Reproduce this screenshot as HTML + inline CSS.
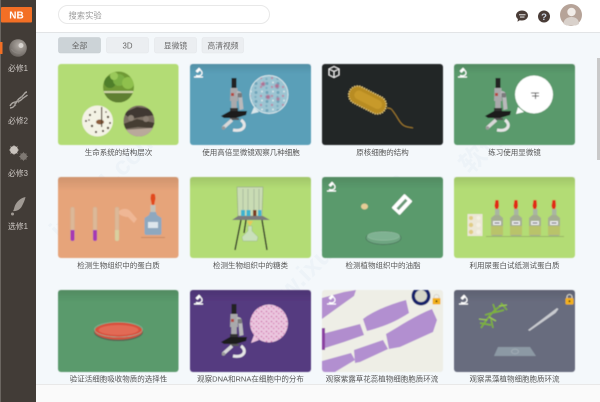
<!DOCTYPE html>
<html lang="zh"><head><meta charset="utf-8"><title>实验</title>
<style>
html,body{margin:0;padding:0;width:600px;height:402px;overflow:hidden;background:#f4f8fb}
svg{display:block}
text{font-family:"Liberation Sans","Noto Sans CJK SC",sans-serif}
.l{font-size:7.5px;fill:#555;text-anchor:middle}
.s{font-size:7.8px;fill:#cfcac6;text-anchor:middle}
.t{font-size:7.8px;fill:#666;text-anchor:middle}
.w{font-size:26px;fill:#edf3f8;font-weight:bold}
</style></head><body>
<svg width="600" height="402" viewBox="0 0 600 402" xmlns="http://www.w3.org/2000/svg">
<defs>
<filter id="b" x="-5%" y="-5%" width="110%" height="110%"><feGaussianBlur stdDeviation="0.45"/></filter>
<filter id="b2"><feGaussianBlur stdDeviation="0.8"/></filter>
<linearGradient id="shade" x1="0" y1="0" x2="0" y2="1"><stop offset="0" stop-color="#000" stop-opacity=".1"/><stop offset="1" stop-color="#000" stop-opacity="0"/></linearGradient>
<radialGradient id="cell" cx=".6" cy=".35" r=".7"><stop offset="0" stop-color="#b5afa9"/><stop offset="1" stop-color="#67615c"/></radialGradient>
<pattern id="tis" width="11" height="9" patternUnits="userSpaceOnUse"><rect width="11" height="9" fill="#9cc4d2"/><circle cx="3" cy="2.500" r="1.500" fill="#6fa5ba"/><circle cx="8" cy="6" r="1.200" fill="#b98fa8"/><circle cx="9" cy="1.500" r="1" fill="#d5e6ea"/><circle cx="2.500" cy="7" r="1.200" fill="#7fb0c2"/></pattern>
<pattern id="pnk" width="5" height="5" patternUnits="userSpaceOnUse"><rect width="5" height="5" fill="#eac6de"/><circle cx="1.500" cy="1.500" r=".8" fill="#cf70ac"/><circle cx="3.700" cy="3.500" r=".9" fill="#dc8fc0"/></pattern>
<symbol id="mic" width="28" height="56" viewBox="0 0 28 56" overflow="visible">
<rect x="11.500" y="0" width="5" height="10" fill="#222"/>
<path d="M10.500 10h7l.5 13h-1.200v9h-5.600v-9h-1.200z" fill="#a9a9ab"/>
<rect x="11" y="15" width="3" height="3" fill="#b5483f"/>
<path d="M17 13c3 0 4.500 1 5 4l1.500 14-4 1-1-12-2-2z" fill="#b9b9bb"/>
<rect x="17.500" y="15" width="4.500" height="4.500" rx="1" fill="#7a7a7c"/>
<rect x="10" y="30" width="8" height="4" fill="#333"/>
<path d="M1 38l9-5h17l-1 4-10 3H4z" fill="#1c1c1e"/>
<rect x="10" y="40" width="9" height="2" fill="#555"/>
<path d="M3 50L12 42" stroke="#d8d8d8" stroke-width="3.500" fill="none"/>
<path d="M21 42C27 46 25 54 13 52" stroke="#e6e6e6" stroke-width="3" fill="none"/>
<circle cx="3.500" cy="50" r="1.800" fill="#999"/>
</symbol>
<symbol id="ico" width="11" height="11" viewBox="0 0 11 11" overflow="visible">
<path d="M1 10h9M3 8.500c3 1 6 0 6-2.500 0-1.500-1-2.500-2-3" fill="none" stroke="#fff" stroke-width="1.200"/>
<path d="M2.500 4l3.500-3.500 2 2L4.500 6z" fill="#fff"/>
</symbol>
<symbol id="lock" width="9" height="11" viewBox="0 0 9 11" overflow="visible">
<path d="M2 5V3a2.500 2.500 0 0 1 5 0v2" fill="none" stroke="#d8d6cc" stroke-width="1.100"/>
<rect x="0.500" y="4" width="8" height="6.500" rx="1" fill="#f2b01e"/>
<circle cx="4.500" cy="7.200" r="1" fill="#5a3d05"/>
</symbol>
<symbol id="bottle" width="16" height="37" viewBox="0 0 16 37" overflow="visible">
<path d="M6.500 0h3l.5 6-1 3h-2.500l-1-3z" fill="#e02c12"/>
<rect x="6" y="9" width="4.500" height="6" fill="#aab5a2"/>
<path d="M5.500 15h5l3.500 3v16a2 2 0 0 1-2 2H4a2 2 0 0 1-2-2V18z" fill="#a4ad92"/>
<rect x="2" y="26" width="12" height="9" fill="#b9c36a"/>
<rect x="4" y="21" width="8" height="4" fill="#e8e8ea"/>
<rect x="5.500" y="22.500" width="5" height="1" fill="#556"/>
</symbol>
<clipPath id="c9"><rect x="322" y="290" width="121" height="82" rx="3"/></clipPath>
<clipPath id="f1"><circle cx="118.500" cy="87" r="15.500"/></clipPath>
<clipPath id="f3"><circle cx="139" cy="121" r="15.500"/></clipPath>
</defs>

<rect width="600" height="402" fill="#f4f8fb"/>

<g>
<text class="w" transform="translate(60 240) rotate(-45)">ixue51.com</text>
<text class="w" transform="translate(260 330) rotate(-45)">www.ixue51.com</text>
<text class="w" transform="translate(470 175) rotate(-45)">软件</text>
</g>

<rect x="36" y="0" width="564" height="32" fill="#fff"/>
<rect x="36" y="32" width="564" height="1" fill="#e2e4e6"/>
<rect x="58.500" y="5.500" width="211" height="18" rx="9" fill="#fff" stroke="#e8e8e8"/>
<text x="68.500" y="18.500" font-size="8.300" fill="#9a9a9a">搜索实验</text>

<path d="M522 10.500c3.500 0 6 2.300 6 5s-2.500 5-6 5c-.8 0-1.500-.1-2.200-.3l-2.300 1.500.4-2.700c-1.200-.9-1.900-2.100-1.900-3.500 0-2.700 2.500-5 6-5z" fill="#4a3d38"/>
<rect x="519" y="14.200" width="6.500" height="1.100" fill="#ddd"/><rect x="520" y="16.500" width="4.500" height="1.100" fill="#ddd"/>
<circle cx="544" cy="16.500" r="6" fill="#4a3d38"/>
<text x="544" y="20" font-size="9.500" font-weight="bold" fill="#cfd8e6" text-anchor="middle">?</text>
<circle cx="571" cy="15" r="11" fill="#b6a398"/>
<circle cx="571.500" cy="12" r="4.200" fill="#f1ece8"/>
<path d="M563.500 24c0-4.500 3.500-7 8-7s7.500 2.500 7.500 7l-3 1.500h-9.500z" fill="#d9d1cb"/>

<rect x="0" y="0" width="36" height="402" fill="#423c37"/>
<rect x="0" y="0" width="1" height="402" fill="#6b6661"/>
<rect x="1" y="7" width="31" height="15.500" rx="1" fill="#f36f25"/>
<text x="16.500" y="18.500" font-size="10" font-weight="bold" fill="#fff" text-anchor="middle">NB</text>
<rect x="0" y="42" width="2.500" height="12" fill="#f36f25"/>
<circle cx="18" cy="48" r="8.800" fill="url(#cell)"/>
<circle cx="21" cy="45.500" r="2.500" fill="#d8d4d0"/><path d="M11.500 49c2 3.500 5 4.500 9 4" fill="none" stroke="#8c8681" stroke-width="1"/>
<text class="s" x="18" y="71">必修1</text>
<g fill="none" stroke="#aaa5a0" stroke-width="1.400"><path d="M10 108C16 108 15 101 20 98S24 92 27 92"/><path d="M10 106C13 100 18 103 21 100S25 97 27.500 95"/></g>
<path d="M14 103l2 3M17 100l2 3M21 96l2 2" stroke="#8e8984" stroke-width=".8"/>
<text class="s" x="18" y="123.500">必修2</text>
<path d="M14 145v10M9 150h10M10.500 146.500l7 7M17.500 146.500l-7 7" stroke="#c2bcb6" stroke-width=".7"/>
<path d="M23.500 152v9M19 156.500h9M20.500 153.500l6 6M26.500 153.500l-6 6" stroke="#7e7872" stroke-width=".7"/>
<circle cx="14" cy="150" r="4" fill="#c8c2bc"/><circle cx="23.500" cy="156.500" r="3.500" fill="#7e7872"/>
<text class="s" x="18" y="176">必修3</text>
<path d="M25.500 197c-5 1-9.500 5-11 10-.5 2-1 3.500-1.500 4 3 .5 7-1 9-5 1.500-3 3-6 3.500-9z" fill="#a09a94"/>
<circle cx="12.500" cy="214" r="1.500" fill="#a09a94"/>
<text class="s" x="18" y="229">选修1</text>

<rect x="58.500" y="37.500" width="42" height="15.500" rx="2" fill="#ccd3d7" stroke="#c4cbcf" stroke-width=".6"/>
<text class="t" x="79.500" y="48.500">全部</text>
<rect x="106.500" y="37.500" width="42" height="15.500" rx="2" fill="#ebeef1" stroke="#e3e6e9" stroke-width=".6"/>
<text class="t" x="127.500" y="48.500">3D</text>
<rect x="154.500" y="37.500" width="42" height="15.500" rx="2" fill="#ebeef1" stroke="#e3e6e9" stroke-width=".6"/>
<text class="t" x="175.500" y="48.500">显微镜</text>
<rect x="202" y="37.500" width="41.500" height="15.500" rx="2" fill="#ebeef1" stroke="#e3e6e9" stroke-width=".6"/>
<text class="t" x="223" y="48.500">高清视频</text>

<g filter="url(#b)">
<!-- ROW 1 -->
<rect x="58" y="64" width="120.500" height="81" rx="3" fill="#b3dc75"/>
<g clip-path="url(#f1)">
<rect x="103" y="71" width="31" height="32" fill="#6f9a35"/>
<circle cx="110" cy="82" r="6" fill="#4f7f2c"/><circle cx="119" cy="80" r="6" fill="#7bb044"/><circle cx="128" cy="83" r="6" fill="#8fc04d"/><circle cx="114" cy="76" r="4" fill="#9ac95a"/>
<rect x="103" y="91" width="31" height="2" fill="#d0d4a8"/>
<rect x="103" y="93" width="31" height="10" fill="#5f7f30"/>
</g>
<circle cx="97.500" cy="121" r="15.500" fill="#f3f2e4"/>
<g fill="#4f3f2f"><ellipse cx="100" cy="122" rx="4" ry="2.500" fill="#8a5c3a"/><rect x="101" y="107" width="1.200" height="20"/><circle cx="90" cy="115" r="1.100"/><circle cx="108" cy="117" r="1.200"/><circle cx="92" cy="126" r="1.200"/><circle cx="108" cy="128" r="1.200"/><circle cx="86" cy="121" r="1"/><circle cx="96" cy="132" r="1.100"/><circle cx="95" cy="112" r="1"/><circle cx="110" cy="123" r="1"/><circle cx="103" cy="131" r="1.100"/><circle cx="89" cy="120" r=".8"/><circle cx="106" cy="112" r=".8"/></g>
<g clip-path="url(#f3)">
<rect x="123" y="105" width="32" height="32" fill="#7a6e62"/>
<path d="M123 113l14-6 14 2 4 6-14 2-10 2z" fill="#3f3830"/>
<path d="M123 124l14-5 18 4-3 5-14-1-13 2z" fill="#443c33"/>
<circle cx="131" cy="118" r="3" fill="#8e8376"/><circle cx="146" cy="119" r="3" fill="#8a7e72"/>
<path d="M123 130l30-2v9h-30z" fill="#b9a99b"/>
</g>

<rect x="190" y="64" width="121" height="81" rx="3" fill="#5a9fb8"/>
<rect x="190" y="64" width="121" height="10" fill="url(#shade)"/>
<use href="#ico" x="193" y="67"/>
<use href="#mic" x="220" y="78"/>
<path d="M254 107l-3 7 8-2z" fill="#d8e6ea"/>
<circle cx="269" cy="94.500" r="19" fill="url(#tis)" stroke="#d8e6ea" stroke-width="1"/>
<g fill="#b0688c" filter="url(#b2)"><circle cx="263" cy="84" r="2"/><circle cx="277" cy="86" r="2"/><circle cx="268" cy="97" r="2"/><circle cx="278" cy="99" r="1.500"/></g>

<rect x="322" y="64" width="121" height="81" rx="3" fill="#242527"/>
<path d="M329 69l5-2.500 5 2.500v6l-5 2.500-5-2.500zM329 69l5 2.500 5-2.500M334 71.500v6" fill="none" stroke="#fff" stroke-width=".9"/>
<path d="M387 108c5 0 5 2 8 6s4 8 8 11 8 2 10 3" fill="none" stroke="#a9812c" stroke-width=".9"/>
<g transform="rotate(27 367.500 100)">
<rect x="347.500" y="91" width="40" height="18" rx="9" fill="#b88c24"/>
<rect x="347.500" y="91" width="40" height="18" rx="9" fill="none" stroke="#f3dd90" stroke-width="1.300" stroke-dasharray="1 1.500"/>
<rect x="353" y="95" width="30" height="9" rx="4.500" fill="#c89a2c"/>
</g>

<rect x="454" y="64" width="121" height="81" rx="3" fill="#5a9a6c"/>
<rect x="454" y="64" width="121" height="10" fill="url(#shade)"/>
<use href="#ico" x="457" y="67"/>
<use href="#mic" x="484" y="78"/>
<path d="M518 107l-2 7 8-2z" fill="#fff"/>
<circle cx="534" cy="94.500" r="19" fill="#fff"/>
<path d="M531 93h8M532 96h7M535.500 93v6" stroke="#444" stroke-width="1" fill="none"/>

<!-- ROW 2 -->
<rect x="58" y="177" width="120.500" height="81" rx="3" fill="#e6a47a"/>
<rect x="58" y="177" width="120.500" height="14" fill="url(#shade)"/>
<rect x="70.500" y="207" width="4" height="34" rx="2" fill="#dcb898" stroke="#cfae90" stroke-width=".4"/>
<path d="M70.500 230h4v9a2 2 0 0 1-4 0z" fill="#a638b4"/>
<rect x="93" y="207" width="4" height="34" rx="2" fill="#dcb898" stroke="#cfae90" stroke-width=".4"/>
<path d="M93 230h4v9a2 2 0 0 1-4 0z" fill="#a638b4"/>
<rect x="115" y="207" width="4" height="34" rx="2" fill="#dcb898" stroke="#cfae90" stroke-width=".4"/>
<path d="M115 230h4v9a2 2 0 0 1-4 0z" fill="#d9cf9f"/>
<path d="M119 211c4-3 9-3 12 1l6 7-3 4-6-6c-3 0-6-1-9-3z" fill="#efb795"/>
<path d="M151 194.500c1-1 3-1 4 0l.5 4-1.500 7h-2l-1.500-7z" fill="#e2491d"/>
<rect x="150.500" y="205" width="5" height="7" fill="#c4c2b8"/>
<path d="M150 212h6l1 3 4.500 3v15a2 2 0 0 1-2 2h-13a2 2 0 0 1-2-2v-15l4.500-3z" fill="#8ea8bf"/>
<rect x="148" y="222" width="10" height="6" fill="#dde6ec"/>
<rect x="141" y="237" width="24" height="1" fill="#c98a62"/>

<rect x="190" y="177" width="121" height="81" rx="3" fill="#b3dc75"/>
<rect x="190" y="177" width="121" height="12" fill="url(#shade)"/>
<path d="M237 187h26l-1 29h-24z" fill="#c9dcb4" stroke="#8a9a80" stroke-width=".5"/>
<g stroke="#aabba0" stroke-width="1"><path d="M243 189v27M248 189v27M254 189v27M259 189v27"/></g>
<rect x="241" y="210" width="4" height="6" fill="#3cb4cf"/><rect x="246.500" y="210" width="4" height="6" fill="#3cb4cf"/><rect x="253" y="210" width="3.500" height="6" fill="#7a3d22"/><rect x="258" y="210" width="3.500" height="6" fill="#3cb4cf"/>
<path d="M232 220l6-4h25l7 4z" fill="#7b7b7b"/>
<path d="M241 220l-6 30M262 220l5 30M246 220l-2 13" stroke="#222" stroke-width="1.400" fill="none"/>
<path d="M248 226h4v5l6 6-1 4h-14l-1-4 6-6z" fill="#c9e0bb" stroke="#8fae8c" stroke-width=".4"/>
<path d="M247 221h6l-3 5z" fill="#e8c75a"/>

<rect x="322" y="177" width="121" height="81" rx="3" fill="#5a9a6c"/>
<rect x="322" y="177" width="121" height="12" fill="url(#shade)"/>
<use href="#ico" x="326" y="181"/>
<ellipse cx="364.500" cy="206.500" rx="3.500" ry="3" fill="#e6cc96"/>
<rect x="396.500" y="195" width="11" height="19" rx="1" fill="#fff" transform="rotate(43 402 204.500)"/>
<rect x="400.500" y="198" width="3" height="13" fill="#6a9a78" transform="rotate(43 402 204.500)"/>
<ellipse cx="383.500" cy="238" rx="17.500" ry="6.500" fill="#6ea581" stroke="#4a6f58" stroke-width=".7"/>
<ellipse cx="383.500" cy="236" rx="16" ry="4.300" fill="#7fb292" stroke="#9cc5a9" stroke-width=".5"/>

<rect x="454" y="177" width="121" height="81" rx="3" fill="#b3dc75"/>
<rect x="454" y="177" width="121" height="12" fill="url(#shade)"/>
<rect x="467.500" y="214" width="15" height="22" fill="#ece7d5"/>
<g fill="#e0cc84"><circle cx="471" cy="218" r="2"/><circle cx="478.500" cy="218" r="2" fill="#f4f0e2"/><circle cx="471" cy="225" r="2.200"/><circle cx="478.500" cy="225" r="2.200" fill="#f4f0e2"/><circle cx="471" cy="232" r="2.200"/><circle cx="478.500" cy="232" r="2.200" fill="#f4f0e2"/></g>
<use href="#bottle" x="489" y="200"/>
<use href="#bottle" x="508" y="200"/>
<use href="#bottle" x="527" y="200"/>
<use href="#bottle" x="546" y="200"/>
<rect x="486" y="236" width="78" height="1" fill="#98b765"/>

<!-- ROW 3 -->
<rect x="58" y="290" width="120.500" height="82" rx="3" fill="#5a9a6c"/>
<rect x="58" y="290" width="120.500" height="12" fill="url(#shade)"/>
<ellipse cx="118.500" cy="332" rx="24.500" ry="9" fill="#55584c" opacity=".8"/>
<ellipse cx="118.500" cy="331" rx="24" ry="8.500" fill="#d8503e"/>
<ellipse cx="118.500" cy="330" rx="20" ry="5" fill="#e26a55"/>
<ellipse cx="118.500" cy="329.500" rx="24" ry="7.500" fill="none" stroke="#8fb59b" stroke-width=".6"/>

<rect x="190" y="290" width="121" height="82" rx="3" fill="#553a80"/>
<rect x="190" y="290" width="121" height="12" fill="url(#shade)"/>
<use href="#ico" x="193" y="294"/>
<use href="#mic" x="220" y="304"/>
<path d="M254 335l-3 8 8-3z" fill="#ecc3dc"/>
<circle cx="269" cy="323.500" r="19" fill="url(#pnk)"/>

<rect x="322" y="290" width="121" height="82" rx="3" fill="#f0efe9"/>
<g clip-path="url(#c9)">
<path d="M322 290h121v82H322z" fill="#eeeee6"/>
<path d="M322 298l22-6 12-2-2 6-14 10-18 13z" fill="#b490cf"/>
<path d="M322 334l38-10 4 11-20 7-22 7z" fill="#b18dce"/>
<path d="M363 319c10-8 28-15 43-19l3 13c-12 8-26 14-42 18z" fill="#b28fd0"/>
<path d="M386 334c14-8 30-19 46-25l5 11-4 12-33 15-11 2z" fill="#b28fd0"/>
<path d="M354 350l29-10 5 9-28 13-5 1z" fill="#b28fd0"/>
<path d="M322 361l29-8 4 7-20 12h-13z" fill="#b28fd0"/>
<rect x="322" y="328" width="3" height="22" fill="#8a3fa0"/>
<circle cx="421" cy="296" r="9.500" fill="#16226a"/><circle cx="421" cy="296" r="6" fill="#d6d6c8"/>
</g>
<use href="#ico" x="326" y="294"/>
<use href="#lock" x="432" y="294"/>

<rect x="454" y="290" width="121" height="82" rx="3" fill="#686c7e"/>
<rect x="454" y="290" width="121" height="12" fill="url(#shade)"/>
<use href="#ico" x="458" y="294"/>
<use href="#lock" x="565" y="294"/>
<g stroke="#7db03c" stroke-width="1.700" fill="none" transform="translate(-5 0)"><path d="M486 328c4-6 8-12 12-16 3-3 6-5 9-7M490 315c6-2 12-3 19-5M485 323l11 2M496 319l2 9M501 312l-3-8M506 303l6 7"/></g>
<g stroke="#9ccb4e" stroke-width="1.300" fill="none" transform="translate(-5 0)"><path d="M492 320l-8-1M494 317l7 4M504 306l8-1"/></g>
<path d="M528 330l25-19 4-3 1.500 1-3 4-26 18z" fill="#c9cbd0"/>
<path d="M498 347h32l6 9h-42z" fill="#8c99a4"/>
<ellipse cx="515" cy="351.500" rx="3.500" ry="2.300" fill="none" stroke="#aab4bc" stroke-width=".7"/>
</g>

<text class="l" x="118.500" y="155">生命系统的结构层次</text>
<text class="l" x="251" y="155">使用高倍显微镜观察几种细胞</text>
<text class="l" x="382.500" y="155">原核细胞的结构</text>
<text class="l" x="514.500" y="155">练习使用显微镜</text>
<text class="l" x="118.500" y="268">检测生物组织中的蛋白质</text>
<text class="l" x="250.500" y="268">检测生物组织中的糖类</text>
<text class="l" x="383" y="268">检测植物组织中的油脂</text>
<text class="l" x="514.500" y="268">利用尿蛋白试纸测试蛋白质</text>

<rect x="36" y="384" width="564" height="18" fill="#fafafa"/>
<rect x="36" y="384" width="564" height="1" fill="#e8e8e8"/>
<text class="l" x="118.500" y="381.500">验证活细胞吸收物质的选择性</text>
<text class="l" x="250.500" y="381.500">观察DNA和RNA在细胞中的分布</text>
<text class="l" x="382" y="381.500">观察紫露草花蕊植物细胞胞质环流</text>
<text class="l" x="514.500" y="381.500">观察黑藻植物细胞胞质环流</text>

<rect x="597" y="58" width="3" height="102" fill="#c9c9c9"/>
</svg>
</body></html>
